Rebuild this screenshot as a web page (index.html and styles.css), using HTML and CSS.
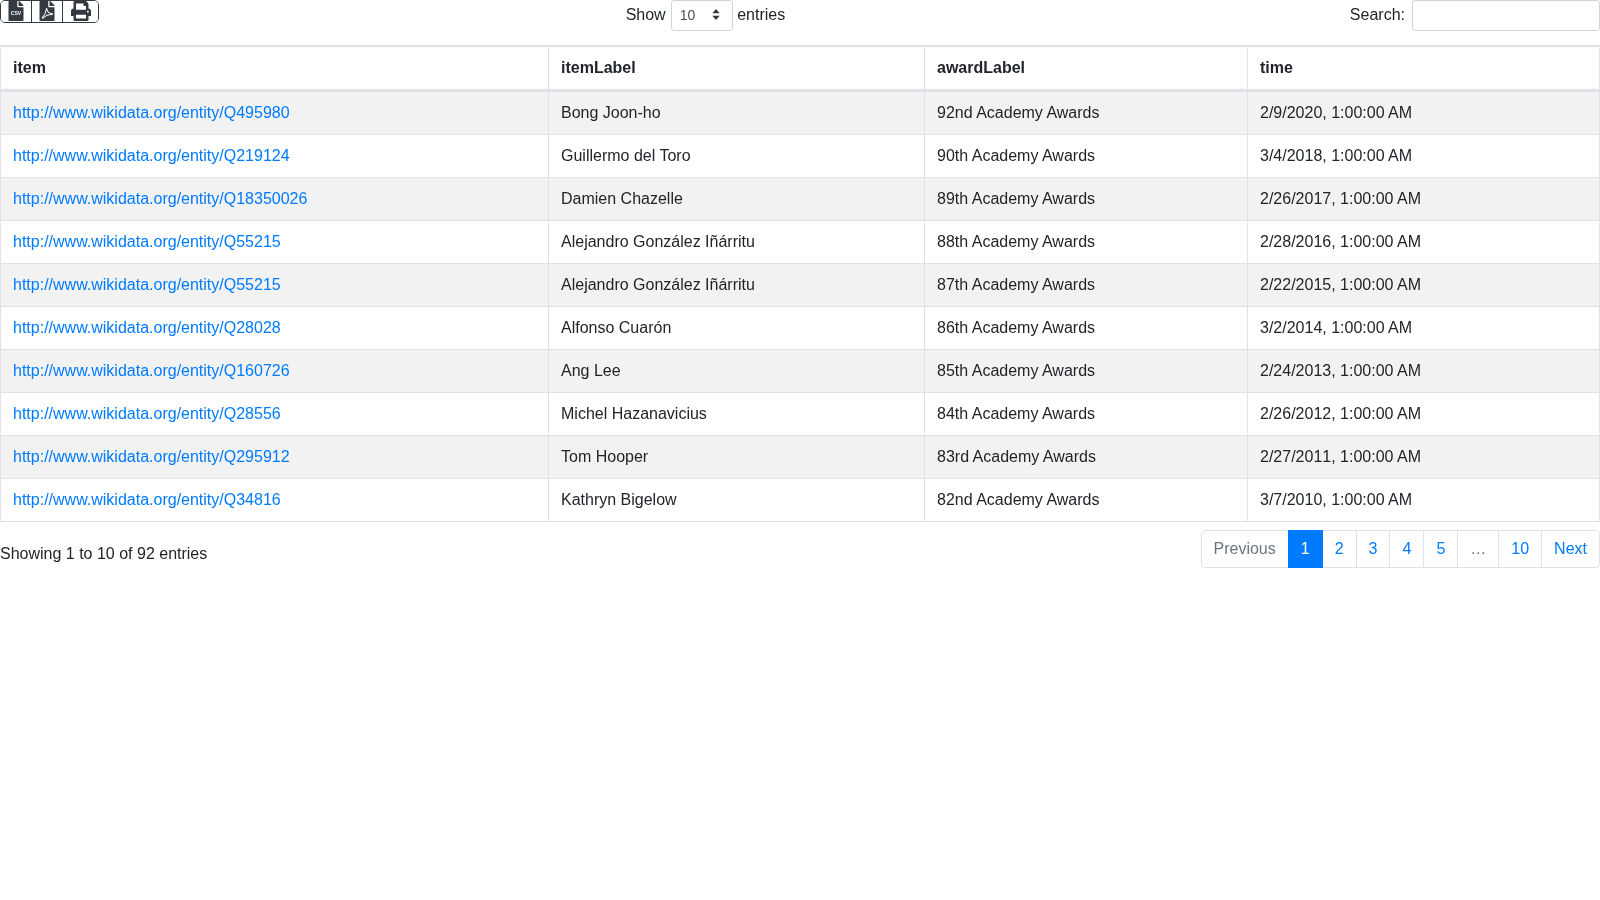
FILE: index.html
```html
<!DOCTYPE html>
<html lang="en">
<head>
<meta charset="utf-8">
<title>Results</title>
<link rel="stylesheet" href="styles.css">
</head>
<body>
<div class="controls">
  <div class="btn-group">
    <button class="icon-btn" aria-label="CSV"><svg width="16" height="20" viewBox="0 0 384 512"><path fill="#343a40" d="M224 136V0H24C10.700 0 0 10.700 0 24v464c0 13.300 10.700 24 24 24h336c13.300 0 24-10.700 24-24V160H248c-13.200 0-24-10.800-24-24zM384 121.900v6.100H256V0h6.100c6.400 0 12.500 2.500 17 7l97.900 98c4.500 4.500 7 10.600 7 16.900z"/><text x="192" y="365" class="csv-label">CSV</text></svg></button>
    <button class="icon-btn" aria-label="PDF"><svg width="16" height="20" viewBox="0 0 384 512"><path fill="#343a40" d="M224 136V0H24C10.700 0 0 10.700 0 24v464c0 13.300 10.700 24 24 24h336c13.300 0 24-10.700 24-24V160H248c-13.200 0-24-10.800-24-24zM384 121.900v6.100H256V0h6.100c6.400 0 12.500 2.500 17 7l97.900 98c4.500 4.500 7 10.600 7 16.900z"/><path fill="none" stroke="#fff" stroke-width="26" stroke-linejoin="round" d="M175 210c-8 60-40 150-95 205-18 20 6 38 28 14 40-45 130-85 205-85 30 0 30-25 0-25-70 0-115-55-125-115-3-18-13-12-13 6z"/></svg></button>
    <button class="icon-btn wide" aria-label="Print"><svg width="20" height="20" viewBox="0 0 512 512"><path fill="#343a40" d="M448 192V77.250c0-8.490-3.370-16.620-9.370-22.630L393.370 9.370c-6-6-14.140-9.370-22.630-9.370H96C78.330 0 64 14.330 64 32v160c-35.350 0-64 28.650-64 64v112c0 8.840 7.160 16 16 16h48v96c0 17.670 14.330 32 32 32h320c17.670 0 32-14.330 32-32v-96h48c8.840 0 16-7.160 16-16V256c0-35.350-28.650-64-64-64zm-64 256H128v-96h256v96zm0-224H128V64h192v48c0 8.840 7.160 16 16 16h48v96zm48 72c-13.250 0-24-10.750-24-24 0-13.260 10.750-24 24-24s24 10.740 24 24c0 13.250-10.750 24-24 24z"/></svg></button>
  </div>
  <label class="length">Show <span class="select"><span>10</span><svg width="8" height="11" viewBox="0 0 8 11"><path fill="#343a40" d="M4 0 7.700 4.300H.3zM4 11 .3 6.700h7.400z"/></svg></span> entries</label>
  <label class="search">Search: <input type="search" class="search-input"></label>
</div>
<table class="results">
  <colgroup><col class="c1"><col class="c2"><col class="c3"><col class="c4"></colgroup>
  <thead><tr><th>item</th><th>itemLabel</th><th>awardLabel</th><th>time</th></tr></thead>
  <tbody>
    <tr><td><a href="#">http://www.wikidata.org/entity/Q495980</a></td><td>Bong Joon-ho</td><td>92nd Academy Awards</td><td>2/9/2020, 1:00:00 AM</td></tr>
    <tr><td><a href="#">http://www.wikidata.org/entity/Q219124</a></td><td>Guillermo del Toro</td><td>90th Academy Awards</td><td>3/4/2018, 1:00:00 AM</td></tr>
    <tr><td><a href="#">http://www.wikidata.org/entity/Q18350026</a></td><td>Damien Chazelle</td><td>89th Academy Awards</td><td>2/26/2017, 1:00:00 AM</td></tr>
    <tr><td><a href="#">http://www.wikidata.org/entity/Q55215</a></td><td>Alejandro González Iñárritu</td><td>88th Academy Awards</td><td>2/28/2016, 1:00:00 AM</td></tr>
    <tr><td><a href="#">http://www.wikidata.org/entity/Q55215</a></td><td>Alejandro González Iñárritu</td><td>87th Academy Awards</td><td>2/22/2015, 1:00:00 AM</td></tr>
    <tr><td><a href="#">http://www.wikidata.org/entity/Q28028</a></td><td>Alfonso Cuarón</td><td>86th Academy Awards</td><td>3/2/2014, 1:00:00 AM</td></tr>
    <tr><td><a href="#">http://www.wikidata.org/entity/Q160726</a></td><td>Ang Lee</td><td>85th Academy Awards</td><td>2/24/2013, 1:00:00 AM</td></tr>
    <tr><td><a href="#">http://www.wikidata.org/entity/Q28556</a></td><td>Michel Hazanavicius</td><td>84th Academy Awards</td><td>2/26/2012, 1:00:00 AM</td></tr>
    <tr><td><a href="#">http://www.wikidata.org/entity/Q295912</a></td><td>Tom Hooper</td><td>83rd Academy Awards</td><td>2/27/20<span class="no-kern">11</span>, 1:00:00 AM</td></tr>
    <tr><td><a href="#">http://www.wikidata.org/entity/Q34816</a></td><td>Kathryn Bigelow</td><td>82nd Academy Awards</td><td>3/7/2010, 1:00:00 AM</td></tr>
  </tbody>
</table>
<div class="footer">
  <div class="info">Showing 1 to 10 of 92 entries</div>
  <ul class="pagination">
    <li class="disabled">Previous</li><li class="active">1</li><li>2</li><li>3</li><li>4</li><li>5</li><li class="disabled">…</li><li>10</li><li>Next</li>
  </ul>
</div>
</body>
</html>
```
FILE: styles.css
```css
* { box-sizing: border-box; }
body { margin: 0; font-family: "Liberation Sans", Arial, sans-serif; font-size: 16px; line-height: 24px; color: #212529; background: #fff; will-change: transform; }
.controls { display: flex; justify-content: space-between; align-items: flex-start; height: 45px; }
.btn-group { display: flex; width: 99px; height: 23px; border: 1px solid #343a40; border-radius: 5px; overflow: hidden; }
.icon-btn { width: 31px; padding: 0; border: 0; border-right: 1px solid #343a40; background: #fff; display: flex; justify-content: center; align-items: flex-start; }
.icon-btn.wide { width: 35px; border-right: 0; }
.csv-label { fill: #fff; font-family: "Liberation Sans", Arial, sans-serif; font-size: 130px; font-weight: 700; text-anchor: middle; }
.length { display: flex; align-items: center; gap: 4.5px; height: 29px; margin-right: 38px; }
.select { width: 62px; height: 31px; margin-top: 2px; margin-left: .5px; border: 1px solid #ced4da; border-radius: 3.2px; padding: 0 12px 2px 8px; display: flex; justify-content: space-between; align-items: center; font-size: 14px; color: #495057; }
.search { display: flex; gap: 7px; height: 29px; align-items: center; }
.search-input { width: 188px; height: 31px; margin-top: 2px; border: 1px solid #ced4da; border-radius: 3.2px; }
.results { width: 1600px; table-layout: fixed; border-collapse: separate; border-spacing: 0; border: 1px solid #dee2e6; }
.c1 { width: 548px; } .c2 { width: 376px; } .c3 { width: 323px; } .c4 { width: 351px; }
th, td { border: 1px solid #dee2e6; border-left-width: 0; border-bottom-width: 0; padding: 9px 12px; text-align: left; }
th { border-bottom-width: 2px; }
th:last-child, td:last-child { border-right-width: 0; }
tbody tr:nth-child(odd) { background: #f2f2f2; }
.no-kern { font-kerning: none; }
a { color: #007bff; text-decoration: none; }
.footer { display: flex; justify-content: space-between; margin-top: 8px; }
.info { padding-top: 12px; }
.pagination { display: flex; list-style: none; margin: 0; padding: 0; }
.pagination li { padding: 6px 12px; height: 38px; border: 1px solid #dee2e6; margin-left: -1px; color: #007bff; }
.pagination li:first-child { border-radius: 4px 0 0 4px; }
.pagination li:last-child { border-radius: 0 4px 4px 0; }
.pagination .disabled { color: #6c757d; }
.pagination .active { position: relative; z-index: 1; background: #007bff; border-color: #007bff; color: #fff; }
```
